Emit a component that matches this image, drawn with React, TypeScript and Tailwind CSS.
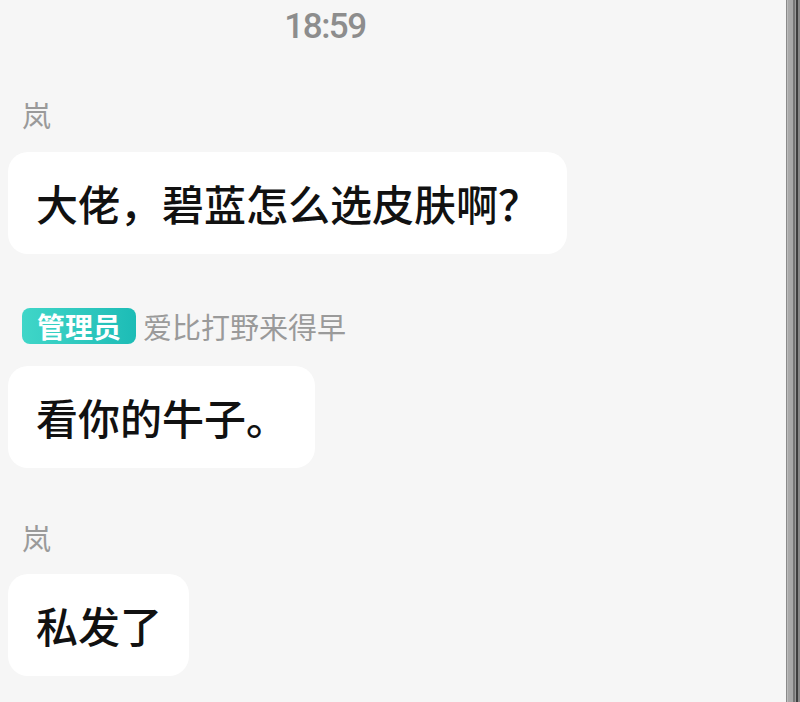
const cjk = "font-['Noto_Sans_CJK_SC','Noto_Sans',sans-serif]";

type Msg = {
  name: string;
  admin?: boolean;
  text: string;
  gapTop: string;
  gapBubble: string;
};

const messages: Msg[] = [
  { name: "岚", text: "大佬，碧蓝怎么选皮肤啊？", gapTop: "mt-[42px]", gapBubble: "mt-[20px]" },
  { name: "爱比打野来得早", admin: true, text: "看你的牛子。", gapTop: "mt-[54px]", gapBubble: "mt-[22px]" },
  { name: "岚", text: "私发了", gapTop: "mt-[51px]", gapBubble: "mt-[19px]" },
];

const AdminBadge = () => (
  <span className="mr-[7px] flex h-[36px] items-center rounded-[8px] bg-gradient-to-r from-[#3fd6c8] to-[#1cbcb6] px-[15px] text-[28px] font-bold leading-none text-white">
    管理员
  </span>
);

const Message = ({ msg }: { msg: Msg }) => (
  <div className={msg.gapTop}>
    <div className="ml-[14px] flex h-[36px] items-center">
      {msg.admin && <AdminBadge />}
      <span className="text-[29px] leading-none text-[#9a9a9a]">{msg.name}</span>
    </div>
    <div className={`${msg.gapBubble} inline-block rounded-[20px] bg-white pl-[28px] pr-[27px] py-[23px] text-[42px] font-medium leading-[56px] text-[#111] [text-spacing-trim:space-all]`}>
      {msg.text}
    </div>
  </div>
);

// stripes of the phone frame at the right edge
const Edge = () => (
  <div className="flex h-full w-[14px] shrink-0">
    <div className="w-[1px] bg-[#8a8a8a]" />
    <div className="w-[1px] bg-[#bdbdbd]" />
    <div className="w-[5px] bg-[#a9a9a9]" />
    <div className="w-[2px] bg-[#777]" />
    <div className="w-[1px] bg-[#9a9a9a]" />
    <div className="w-[2px] bg-[#3f3f3f]" />
    <div className="w-[2px] bg-[#888]" />
  </div>
);

export default function App() {
  return (
    <div className={`flex h-[702px] w-[800px] overflow-hidden bg-[#f6f6f6] ${cjk}`}>
      <div className="flex-1 pl-[8px]">
        <div className="flex h-[54px] w-[634px] items-center justify-center font-['Roboto',sans-serif] text-[35px] font-medium tracking-[-1.5px] text-[#8d8d8d]">
          18:59
        </div>
        <div className="flex flex-col items-start">
          {messages.map((m, i) => (
            <Message key={i} msg={m} />
          ))}
        </div>
      </div>
      <Edge />
    </div>
  );
}
